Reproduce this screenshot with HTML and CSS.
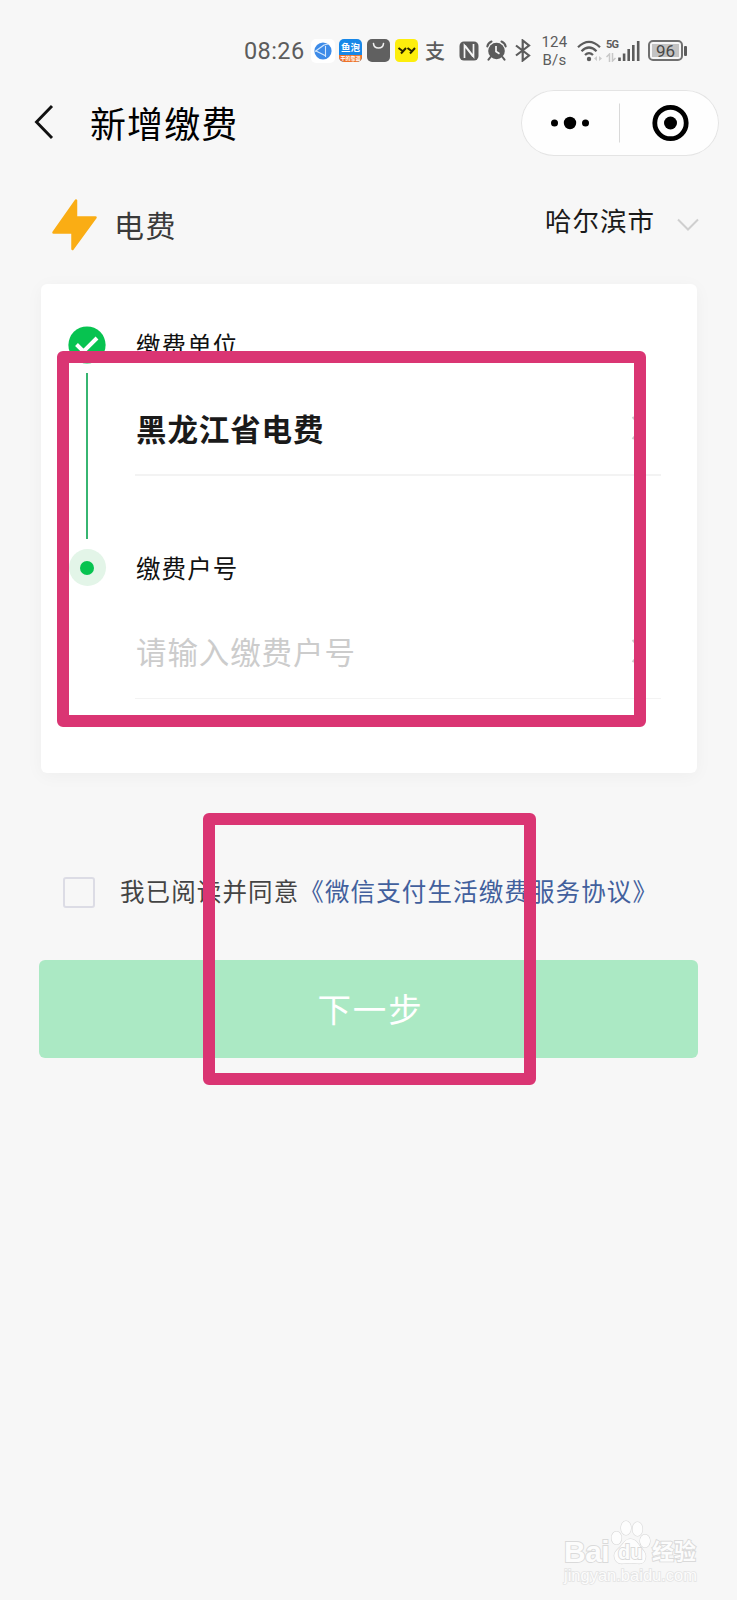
FILE: index.html
```html
<!DOCTYPE html>
<html lang="zh-CN">
<head>
<meta charset="utf-8">
<title>新增缴费</title>
<link rel="stylesheet" href="styles.css">
</head>
<body>
<div class="screen">
  <header class="status">
    <span class="time">08:26</span>
    <svg class="ic-globe" width="24" height="24" viewBox="0 0 24 24"><rect width="24" height="24" rx="5" fill="#fff"/><circle cx="12" cy="12" r="8.6" fill="#3d8be8"/><path d="M4 12.500l9-6.500M5 12l10 5M14.500 7v11M13 6l4-1" fill="none" stroke="#d5e8fc" stroke-width="1.1"/></svg>
    <span class="app-fish"><b>鱼泡</b><i>干的靠谱</i></span>
    <svg class="ic-bag" width="23" height="23" viewBox="0 0 23 23"><rect width="23" height="23" rx="5" fill="#606060"/><path d="M6.500 4.500c.5 6 9.500 6 10 0" fill="none" stroke="#f0f0f0" stroke-width="1.600" stroke-linecap="round"/></svg>
    <svg class="ic-yy" width="23" height="23" viewBox="0 0 23 23"><rect width="23" height="23" rx="4.500" fill="#fdee0c"/><path d="M3.500 9l4 3M11 9L6 14.500M12.500 9l4 3M20 9L15 14.500" fill="none" stroke="#2b2500" stroke-width="2"/></svg>
    <span class="pay">支</span>
    <svg class="ic-nfc" width="20" height="20" viewBox="0 0 20 20"><rect x=".5" y=".5" width="19" height="19" rx="4.500" fill="#5c5c5c"/><path d="M5.500 17V4.500L14 15.500M14.500 3v12.500L6 4.500" fill="none" stroke="#f5f5f5" stroke-width="1.700"/></svg>
    <svg class="ic-alarm" width="21" height="21" viewBox="0 0 21 21"><circle cx="10.500" cy="11" r="8.300" fill="#5c5c5c"/><path d="M1.300 6.500Q2 3 5.500 1.500M19.700 6.500Q19 3 15.500 1.500M4.500 17l-2 2.700M16.500 17l2 2.700" fill="none" stroke="#5c5c5c" stroke-width="2" stroke-linecap="round"/><path d="M10 6v5.500l3.500 2.300" fill="none" stroke="#f7f7f7" stroke-width="1.700"/></svg>
    <svg class="ic-bt" width="16" height="23" viewBox="0 0 16 23"><path d="M1 6.500l13 10-6.300 5V1.500l6.300 5-13 10" fill="none" stroke="#5c5c5c" stroke-width="2.200"/></svg>
    <span class="speed"><span>124</span><span>B/s</span></span>
    <svg class="ic-wifi" width="26" height="22" viewBox="0 0 26 22"><path d="M1 7.200Q12 -3.500 23 7.200M4.500 11.200Q12 3.800 19.500 11.200M8 15Q12 11 16 15" fill="none" stroke="#5c5c5c" stroke-width="2.200"/><circle cx="12" cy="19" r="2.200" fill="#5c5c5c"/><path d="M17 18.500l3-2.500v5zM25 18.500l-3-2.500v5z" fill="#ccc"/></svg>
    <span class="cell"><span class="net">5G</span><svg width="10" height="9" viewBox="0 0 10 9"><path d="M3.500 9V1L.5 4M6.500 0v8l3-3" fill="none" stroke="#c8c8c8" stroke-width="1.500"/></svg></span>
    <svg class="ic-bars" width="22" height="22" viewBox="0 0 22 22"><path d="M1.500 17.500V21M6.100 13.500V21M10.700 9V21M15.300 5V21M20.200 1V21" stroke="#5c5c5c" stroke-width="2.600" fill="none"/></svg>
    <span class="battery"><span class="level">96</span></span><span class="nub"></span>
  </header>

  <nav class="nav">
    <svg class="back" width="20" height="36" viewBox="0 0 20 36"><path d="M18 2L2.500 18 18 34" fill="none" stroke="#111" stroke-width="2.900"/></svg>
    <h1 class="title">新增缴费</h1>
    <div class="capsule">
      <svg width="198" height="66" viewBox="0 0 198 66"><circle cx="33.500" cy="33" r="3.500"/><circle cx="49" cy="33" r="6.200"/><circle cx="64.500" cy="33" r="3.500"/><path d="M98.500 13.500v39" stroke="#d9d9d9" stroke-width="1"/><circle cx="149.500" cy="33" r="15.700" fill="none" stroke="#000" stroke-width="4.800"/><circle cx="149.500" cy="33" r="6.500"/></svg>
    </div>
  </nav>

  <section class="kind">
    <svg class="bolt" width="47" height="54" viewBox="0 0 47 54"><path d="M25 2.500V19.500H44.500L21.500 51V34.500H2.500z" fill="#faad14" stroke="#faad14" stroke-width="2.500" stroke-linejoin="round"/></svg>
    <span class="kind-name">电费</span>
    <span class="city">哈尔滨市</span>
    <svg class="down" width="22" height="14" viewBox="0 0 22 14"><path d="M1 1.500l10 10 10-10" fill="none" stroke="#cfcfcf" stroke-width="2"/></svg>
  </section>

  <main class="card">
    <div class="steps">
      <svg width="38" height="38" viewBox="0 0 38 38"><circle cx="19" cy="19" r="18.600" fill="#07c350"/><path d="M8.500 18.500l7 7L29 12" fill="none" stroke="#fff" stroke-width="4"/></svg>
      <span class="track"></span>
      <span class="halo"><span class="dot"></span></span>
    </div>
    <div class="fields">
      <div class="label">缴费单位</div>
      <div class="row"><span class="value">黑龙江省电费</span><svg width="14" height="26" viewBox="0 0 14 26"><path d="M1.500 2l10.500 11L1.500 24" fill="none" stroke="#ccc" stroke-width="2"/></svg></div>
      <div class="label second">缴费户号</div>
      <div class="row last"><span class="placeholder">请输入缴费户号</span><svg width="14" height="26" viewBox="0 0 14 26"><path d="M1.500 2l10.500 11L1.500 24" fill="none" stroke="#ccc" stroke-width="2"/></svg></div>
    </div>
  </main>

  <div class="agree">
    <span class="box"></span>
    <span class="terms">我已阅读并同意<a class="link">《微信支付生活缴费服务协议》</a></span>
  </div>
  <button class="next">下一步</button>

  <div class="mark mark-form"></div>
  <div class="mark mark-next"></div>

  <div class="brand">
    <div class="brand-top">
      <span class="bai">Bai</span>
      <span class="paw"><svg width="42" height="46" viewBox="0 0 42 46"><g fill="#fdfdfd" stroke="#d8d8d8" stroke-width="1.200"><ellipse cx="6.500" cy="18" rx="5" ry="6.500"/><ellipse cx="16" cy="8" rx="5" ry="7"/><ellipse cx="27.500" cy="9" rx="5" ry="7"/><ellipse cx="35" cy="21" rx="5" ry="6.500"/><path d="M20.500 19c5 0 7 4 10 8s6 6 5 11-4 6-8 5.500-10-.5-14 0-8-1-9-6 2-7 6-11 5-7.500 10-7.500z"/></g></svg><span class="du">du</span></span>
      <span class="exp">经验</span>
    </div>
    <div class="site">jingyan.baidu.com</div>
  </div>
</div>
</body>
</html>
```
FILE: styles.css
```css
* { box-sizing: border-box; }
body { margin: 0; background: #f7f7f7; font-family: "Noto Sans CJK SC", sans-serif; }
svg { display: block; flex: none; }
.screen { position: relative; width: 737px; height: 1600px; overflow: hidden; background: #f7f7f7; }

.status { display: flex; align-items: center; height: 82px; padding: 20px 0 1px 244px; color: #5c5c5c; font-family: Roboto, sans-serif; }
.time { width: 67px; font-size: 23.5px; letter-spacing: .4px; line-height: 24px; white-space: nowrap; }
.app-fish { display: flex; flex-direction: column; width: 23px; height: 23px; margin-left: 4px; border-radius: 5px; overflow: hidden; background: #1687e8; color: #fff; font-family: "Noto Sans CJK SC", sans-serif; text-align: center; }
.app-fish b { height: 16px; font-size: 9.5px; line-height: 17px; white-space: nowrap; }
.app-fish i { height: 7px; background: #ef7328; font-size: 5px; line-height: 6px; font-style: normal; font-weight: 700; white-space: nowrap; }
.ic-bag { margin-left: 5px; }
.ic-yy { margin-left: 5px; }
.pay { width: 22px; margin-left: 7px; font: 500 20px/22px "Noto Sans CJK SC", sans-serif; }
.ic-nfc { margin-left: 12px; }
.ic-alarm { margin-left: 7px; }
.ic-bt { margin-left: 8px; }
.speed { display: flex; flex-direction: column; width: 27px; margin-left: 10px; font-size: 15px; line-height: 18px; letter-spacing: .3px; text-align: center; }
.ic-wifi { margin-left: 9px; }
.cell { display: flex; flex-direction: column; gap: 3px; width: 13px; margin-left: 3px; }
.net { font-size: 11px; line-height: 10px; font-weight: 700; letter-spacing: -.8px; }
.ic-bars { margin-left: -1px; }
.battery { width: 35px; height: 21px; margin-left: 8px; padding: 2px; border: 2px solid #707070; border-radius: 5px; }
.level { display: block; width: 27px; height: 13px; background: #c3c3c3; color: #484848; font-size: 17px; line-height: 14px; text-align: center; }
.nub { width: 3px; height: 10px; margin-left: 1px; border-radius: 1px; background: #5c5c5c; }

.nav { display: flex; height: 108px; padding: 8px 18px 0 34px; }
.back { margin-top: 14px; }
.title { margin: 10px 0 0 36px; font-size: 36px; line-height: 44px; letter-spacing: 1.1px; font-weight: 400; color: #000; }
.capsule { width: 198px; height: 66px; margin-left: auto; border-radius: 33px; background: #fefefe; box-shadow: inset 0 0 0 1px #e4e4e4; }

.kind { display: flex; height: 94px; padding: 8px 38px 0 51px; }
.kind-name { margin: 6px 0 0 16px; font-size: 30px; line-height: 40px; letter-spacing: 1.5px; color: #3a3a3a; }
.city { margin: 4px 0 0 auto; font-size: 26.500px; line-height: 36px; letter-spacing: 1px; color: #1a1a1a; }
.down { margin: 20px 0 0 22px; }

.card { display: flex; width: 656px; height: 489px; margin-left: 41px; padding: 42px 36px 0 27px; border-radius: 6px; background: #fff; box-shadow: 0 3px 18px rgba(0, 0, 0, .04); }
.steps { display: flex; flex-direction: column; align-items: center; width: 38px; }
.track { width: 2px; height: 166px; margin: 9px 0 10px; background: #37b571; }
.halo { display: flex; align-items: center; justify-content: center; width: 37px; height: 37px; border-radius: 50%; background: #e3f5e8; }
.dot { width: 14px; height: 14px; border-radius: 50%; background: #07c350; }
.fields { flex: 1; margin-left: 29px; }
.label { height: 38px; padding-left: 1px; font-size: 24.500px; line-height: 37px; letter-spacing: 1.1px; color: #111; }
.row { display: flex; justify-content: space-between; align-items: center; height: 112px; padding: 17px 16px 0 1px; border-bottom: 2px solid #f3f3f3; }
.last { padding-top: 16px; border-bottom-width: 1px; }
.second { margin-top: 73px; }
.value, .placeholder { font-size: 30.500px; line-height: 40px; letter-spacing: .9px; color: #1a1a1a; font-weight: 700; }
.placeholder { font-weight: 400; color: #ccc; }

.agree { display: flex; height: 187px; padding: 105px 0 0 63px; }
.box { width: 32px; height: 31px; margin-top: -1px; border: 2px solid #dcdce5; border-radius: 3px; }
.terms { margin: -6px 0 0 25px; font-size: 24.500px; line-height: 38px; letter-spacing: 1.12px; color: #444; white-space: nowrap; }
.link { color: #42609d; }
.next { display: block; width: 659px; height: 98px; margin-left: 39px; padding: 0 0 3px 4px; border: 0; border-radius: 6px; background: #abe9c4; color: #fff; font: 400 33.500px/95px "Noto Sans CJK SC", sans-serif; letter-spacing: 1.800px; }

/* Highlight frames drawn over the form */
.mark { position: absolute; border: 12px solid #da3573; border-radius: 6px; }
.mark-form { left: 57px; top: 351px; width: 589px; height: 376px; }
.mark-next { left: 203px; top: 813px; width: 333px; height: 272px; }

/* Corner watermark */
.brand { position: absolute; left: 564px; top: 1520px; width: 150px; color: #fcfcfc; font-family: "Liberation Sans", sans-serif; -webkit-text-stroke: 1.800px #dadada; paint-order: stroke fill; }
.brand-top { display: flex; height: 46px; }
.bai { width: 46px; padding-top: 16px; font-size: 30px; line-height: 32px; font-weight: 700; letter-spacing: -.5px; }
.paw { position: relative; width: 42px; }
.du { position: absolute; left: 8px; top: 21px; font-size: 20px; line-height: 22px; font-weight: 700; }
.exp { padding-top: 12px; font: 700 22px/34px "Noto Sans CJK SC", sans-serif; white-space: nowrap; }
.site { font-size: 16.500px; line-height: 19px; -webkit-text-stroke: 1.600px #e4e4e4; }
```
